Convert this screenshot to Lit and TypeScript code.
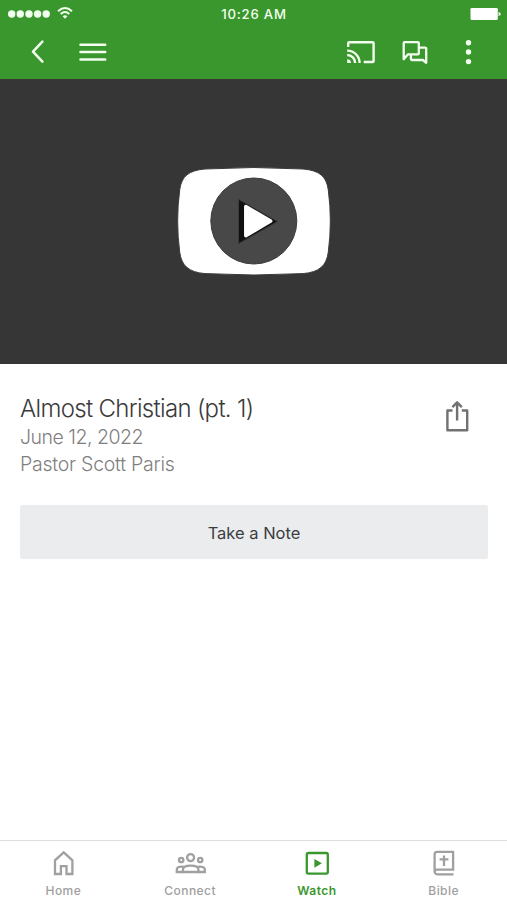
import { LitElement, html, css, svg } from "lit";
import { customElement } from "lit/decorators.js";

const tabs = [
  {
    label: "Home",
    icon: svg`<path d="M6 25V11.3L14.7 3.3L23.4 11.3V25H17.5V17.2H11.9V25Z"/>`,
  },
  {
    label: "Connect",
    wide: true,
    icon: svg`<circle cx="17.6" cy="8.6" r="3.5"/><circle cx="8.2" cy="11" r="2.2"/><circle cx="27.2" cy="11" r="2.2"/>
      <path d="M10 23V20.6C10 18 13.2 16.7 17.7 16.7S25.4 18 25.4 20.6V23Z"/>
      <path d="M10 23H3.8V20.6C3.8 18 7 17.2 11 18M25.4 23H31.8V20.6C31.8 18 28.4 17.2 24.4 18"/>`,
  },
  {
    label: "Watch",
    active: true,
    icon: svg`<rect x="3.8" y="4" width="21" height="20.6" rx="1.6"/><path d="M11.4 9.9V18.7L18.9 14.3Z" fill="currentColor" stroke="none"/>`,
  },
  {
    label: "Bible",
    icon: svg`<path d="M23.5 25.4H7.5A2.9 2.9 0 0 1 4.6 22.5V5.4A2.6 2.6 0 0 1 7.2 2.8H23.1V20.6H7.5A2.6 2.6 0 0 0 4.7 22.6M14 6.6V17M9.6 10.4H18.4"/>`,
  },
];

@customElement("app-root")
export class AppRoot extends LitElement {
  static styles = css`
    :host {
      display: flex;
      flex-direction: column;
      height: 900px;
      width: 507px;
      overflow: hidden;
      background: #fff;
      font-family: Inter, "Liberation Sans", sans-serif;
      color: #3b3b3b;
    }
    svg {
      display: block;
      fill: none;
      stroke: currentColor;
      flex: none;
    }
    .top {
      background: #3a972e;
      color: #f3ffee;
      height: 79px;
      flex: none;
    }
    .status {
      display: grid;
      grid-template-columns: 1fr auto 1fr;
      align-items: center;
      height: 28px;
      padding: 0 6px 0 7px;
    }
    .time {
      font-size: 13.2px;
      font-weight: 500;
      letter-spacing: 0.8px;
      line-height: 28px;
    }
    .battery {
      justify-self: end;
    }
    .bar {
      display: flex;
      align-items: center;
      height: 48px;
      padding: 0 25px 0 24px;
    }
    .menu {
      margin-left: 27px;
      margin-right: auto;
    }
    .chat {
      margin: 0 25px;
    }
    .video {
      height: 284.5px;
      flex: none;
      background: #363636;
      display: flex;
      align-items: center;
      justify-content: center;
    }
    .info {
      display: flex;
      justify-content: space-between;
      padding: 28.5px 37px 0 20px;
    }
    h1,
    p {
      margin: 0;
      white-space: nowrap;
    }
    h1 {
      font-size: 24px;
      line-height: 33px;
      font-weight: 300;
      letter-spacing: -0.68px;
    }
    p {
      font-size: 19.5px;
      line-height: 27px;
      font-weight: 300;
      color: #7f7f7f;
      letter-spacing: -0.24px;
    }
    p.date {
      line-height: 26px;
      margin: -1px 0 1px;
      letter-spacing: -0.5px;
    }
    .share {
      color: #717171;
      margin-top: 7px;
    }
    .note {
      margin: 27px 19px 0 20px;
      height: 54px;
      border: 0;
      border-radius: 2px;
      background: #ebecee;
      color: #3c3d3f;
      font: 400 16.5px/54px Inter, "Liberation Sans", sans-serif;
      padding: 1px 0 0;
      flex: none;
    }
    nav {
      margin-top: auto;
      height: 59px;
      border-top: 1px solid #dedede;
      display: grid;
      grid-template-columns: repeat(4, 1fr);
    }
    .tab {
      display: flex;
      flex-direction: column;
      align-items: center;
      color: #a0a0a0;
      padding-top: 8px;
      font-size: 12px;
      font-weight: 500;
      letter-spacing: 0.45px;
      line-height: 16px;
    }
    .tab svg {
      stroke-width: 2.3;
      margin-bottom: 6px;
    }
    .active {
      color: #3a972e;
      font-weight: 600;
    }
  `;

  render() {
    return html`
      <header class="top">
        <div class="status">
          <svg width="68" height="16" viewBox="7 6 68 16">
            ${[11.7, 20.3, 29, 37.6, 46.2].map(
              (x) => svg`<circle cx=${x} cy="14" r="3.7" fill="currentColor" stroke="none"/>`
            )}
            <path d="M58 11.2Q65 4.8 72 11.2M60.7 14Q65 10.1 69.3 14" stroke-width="1.9" />
            <path d="M62.6 16.2Q65 14.4 67.4 16.2L65 18.8Z" fill="currentColor" stroke="none" />
          </svg>
          <span class="time">10:26 AM</span>
          <svg class="battery" width="31" height="14" viewBox="470 6 31 14">
            <rect x="470.5" y="7" width="27.3" height="12" rx="1.3" fill="#fff" stroke="none" />
            <path d="M498.5 11Q500.8 11.3 500.8 13T498.5 15Z" fill="currentColor" stroke="none" />
          </svg>
        </div>
        <div class="bar">
          <svg width="28" height="28" viewBox="24 38 28 28" stroke-width="2.5" stroke-linecap="round" stroke-linejoin="round">
            <path d="M42.4 41.6L33 51.6L42.4 61.6" />
          </svg>
          <svg class="menu" width="28" height="28" viewBox="79 38 28 28" stroke-width="2.5" stroke-linecap="round">
            <path d="M80.5 44.7H105.2M80.5 52H105.2M80.5 59.4H105.2" />
          </svg>
          <svg width="30" height="28" viewBox="346 38 30 28" stroke-width="2.4">
            <path d="M348.2 47V43.2Q348.2 42.2 349.2 42.2H372.6Q373.6 42.2 373.6 43.2V61Q373.6 62 372.6 62H363.7" />
            <path d="M347.2 50.6A12.4 12.4 0 0 1 359.6 63M347.2 55A8 8 0 0 1 355.2 63" />
            <path d="M347.2 59.2A3.8 3.8 0 0 1 351 63H347.2Z" fill="currentColor" stroke="none" />
          </svg>
          <svg class="chat" width="28" height="28" viewBox="401 38 28 28" stroke-width="2.3" stroke-linejoin="round">
            <path d="M403.7 59.2V43.2Q403.7 42.2 404.7 42.2H417.8Q418.8 42.2 418.8 43.2V53.4Q418.8 54.4 417.8 54.4H407.8Z" />
            <path d="M419 47.6H425.2Q426.2 47.6 426.2 48.6V62.8L422.9 60H411.9Q410.9 60 410.9 59V54.8" />
          </svg>
          <svg width="28" height="28" viewBox="454 38 28 28">
            ${[42.7, 52, 61.6].map((y) => svg`<circle cx="468.5" cy=${y} r="2.7" fill="currentColor" stroke="none"/>`)}
          </svg>
        </div>
      </header>
      <section class="video">
        <svg width="155" height="110" viewBox="176 166 155 110" stroke="none">
          <path
            d="M205 169Q253.7 166 303 169C319 170.4 326.5 176 328.3 190Q332.4 221 328.3 252C326.5 266 319 272.2 303 273.6Q253.7 276.4 205 273.6C189 272.2 181.5 266 179.7 252Q175.6 221 179.7 190C181.5 176 189 170.4 205 169Z"
            fill="#fff"
          />
          <circle cx="253.8" cy="221" r="43" fill="#484848" />
          <path d="M238.5 199.3V243.7L277.6 221.5Z" fill="#111" />
          <path d="M245.8 206.5V235.8L270.7 221.1Z" fill="#fff" stroke="#fff" stroke-width="3.5" stroke-linejoin="round" />
        </svg>
      </section>
      <section class="info">
        <div>
          <h1>Almost Christian (pt. 1)</h1>
          <p class="date">June 12, 2022</p>
          <p>Pastor Scott Paris</p>
        </div>
        <svg class="share" width="26" height="34" viewBox="444 399 26 34" stroke-width="2.4" stroke-linejoin="round">
          <path d="M452.5 410.5H447.4V430.3H467.2V410.5H461.8M457.1 420.5V402.5M452.4 407.2L457.1 402.3L461.8 407.2" />
        </svg>
      </section>
      <button class="note">Take a Note</button>
      <nav>
        ${tabs.map(
          (t) => html`<div class="tab ${t.active ? "active" : ""}">
            <svg width=${t.wide ? 34 : 28} height="28" viewBox="0 0 ${t.wide ? 34 : 28} 28">${t.icon}</svg>
            <span>${t.label}</span>
          </div>`
        )}
      </nav>
    `;
  }
}
